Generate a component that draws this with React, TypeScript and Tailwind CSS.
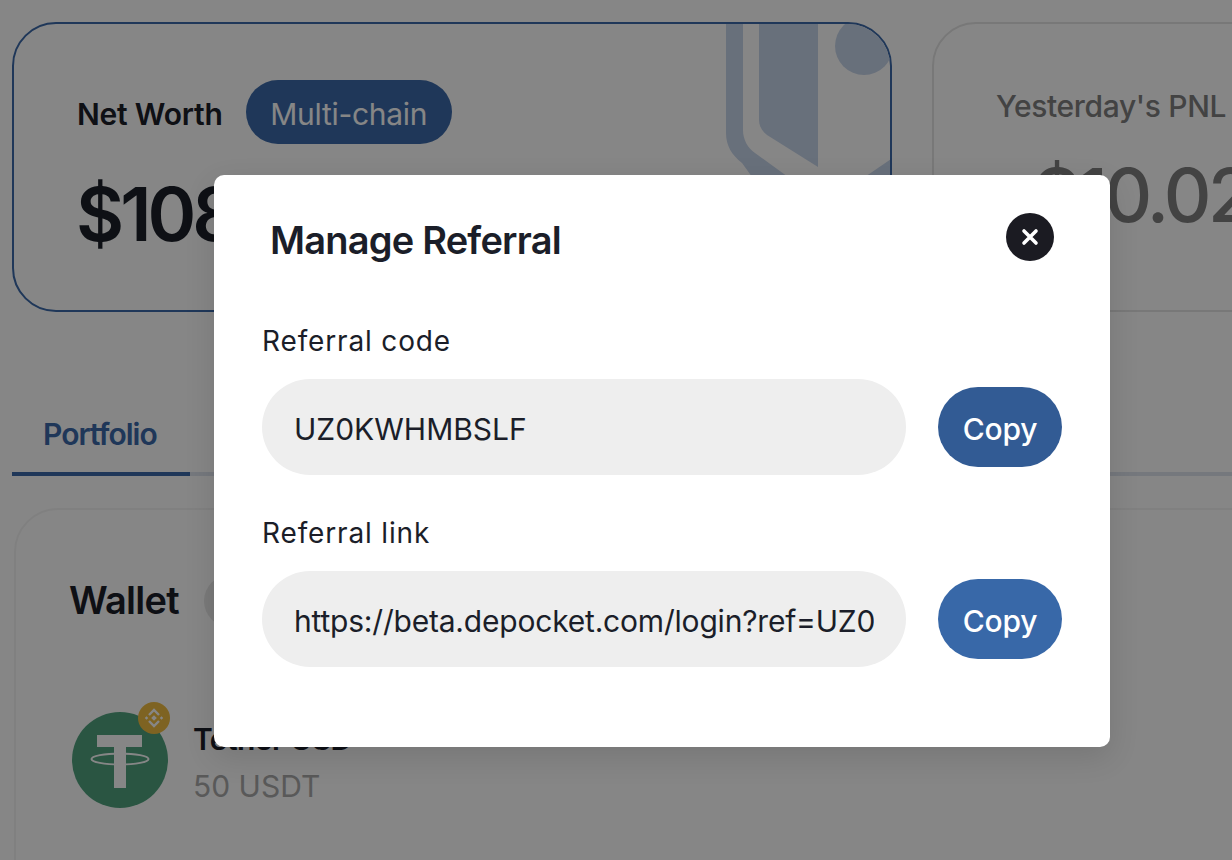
import React from "react";

function ShieldMark() {
  return (
    <svg className="absolute left-[712px] top-0" width="168" height="200" viewBox="0 0 168 200" fill="#c7d5ea">
      <path d="M0 0 H17 V106 C17 116 22 124 29 129 L80 166 V200 H60 L16 139 C6 131 0 122 0 109 Z" />
      <path d="M33 0 H92 V143 L41 111 C36 107 33 102 33 96 Z" />
      <circle cx="138" cy="22" r="29" />
      <path d="M168 133 L130 159 V170 H168 Z" />
    </svg>
  );
}

function TetherIcon() {
  return (
    <div className="relative -mt-[2px] h-[98px] w-[98px] shrink-0">
      <div className="mt-[1px] flex h-[96px] w-[96px] items-center justify-center rounded-full bg-[#50a37f] shadow-[0_0_0_1px_rgba(255,255,255,0.3)]">
        <svg width="96" height="96" viewBox="0 0 96 96" fill="none">
          <path d="M25 23 H70 V35 H54 V76 H42 V35 H25 Z" fill="#ffffff" />
          <ellipse cx="48" cy="47" rx="28.5" ry="5.5" stroke="#ffffff" strokeWidth="2" />
        </svg>
      </div>
      <div className="absolute right-0 top-[-9px] flex h-[32px] w-[32px] items-center justify-center rounded-full bg-[#f0bd42]">
        <svg width="22" height="22" viewBox="0 0 22 22" fill="none" stroke="#ffffff" strokeWidth="2.4">
          <path d="M6 8 L11 3 L16 8" />
          <path d="M6 14 L11 19 L16 14" />
          <path d="M11 8.2 L13.8 11 L11 13.8 L8.2 11 Z" fill="#ffffff" stroke="none" />
          <path d="M3.5 9.3 L5.2 11 L3.5 12.7 L1.8 11 Z M18.5 9.3 L20.2 11 L18.5 12.7 L16.8 11 Z" fill="#ffffff" stroke="none" />
        </svg>
      </div>
    </div>
  );
}

function Field({ label, value, button, tracking }: { label: string; value: string; button: string; tracking: string }) {
  return (
    <div className="flex flex-col">
      <div className="text-[28px] leading-[38px] tracking-[0.85px] text-[#1b1e29]">{label}</div>
      <div className="mt-[19px] flex items-center gap-[32px]">
        <div className="flex h-[96px] w-[644px] items-center rounded-full bg-[#eeeeee] px-[32px] pt-[4px]">
          <div className={`overflow-hidden whitespace-nowrap text-[30px] text-[#1b1e29] ${tracking}`}>{value}</div>
        </div>
        <button className={`h-[80px] w-[124px] rounded-full pt-[4px] text-[30px] font-medium tracking-[-0.2px] text-white ${button}`}>
          Copy
        </button>
      </div>
    </div>
  );
}

export default function App() {
  return (
    <div className="relative h-[860px] w-[1232px] overflow-hidden bg-white font-['Inter',sans-serif]">
      <div className="flex gap-[40px] pl-[12px] pt-[22px]">
        <div className="relative h-[290px] w-[880px] shrink-0 overflow-hidden rounded-[44px] border-2 border-[#3b69a9] pl-[64px] pt-[56px]">
          <ShieldMark />
          <div className="relative -ml-[1px] flex items-center gap-[23px]">
            <span className="pt-[4px] text-[30px] font-semibold tracking-[-0.2px] text-[#1b2029]">Net Worth</span>
            <span className="flex h-[64px] w-[206px] items-center justify-center rounded-full bg-[#3b69a9] pt-[4px] text-[30px] tracking-[-0.3px] text-white">Multi-chain</span>
          </div>
          <div className="relative -ml-[2px] mt-[25px] text-[74px] font-semibold leading-[90px] tracking-[-4px] text-[#1b2029]">$108,245.80</div>
        </div>
        <div className="h-[290px] w-[600px] shrink-0 rounded-[44px] border-2 border-[#e4e4e4] pl-[62px] pt-[62px]">
          <div className="text-[30px] font-medium leading-[40px] tracking-[-0.35px] text-[#808080]">Yesterday's PNL</div>
          <div className="ml-[37px] mt-[24px] text-[74px] font-medium leading-[90px] tracking-[-3.5px] text-[#808080]">$10.02</div>
        </div>
      </div>

      <div className="ml-[12px] mt-[101px] flex border-b-4 border-[#dfe4ee]">
        <div className="mb-[-4px] w-[178px] border-b-4 border-[#3b69a9] pb-[17px] pl-[31px] text-[30px] font-semibold leading-[42px] tracking-[-1px] text-[#3b69a9]">
          Portfolio
        </div>
      </div>

      <div className="ml-[14px] mt-[32px] h-[500px] w-[1400px] rounded-[44px] border-2 border-[#f4f4f4] pl-[53px] pt-[62px]">
        <div className="flex items-center gap-[25px]">
          <span className="text-[38px] font-semibold tracking-[-0.7px] text-[#1b2029]">Wallet</span>
          <span className="h-[52px] w-[120px] rounded-full bg-[#e8e8e8]"></span>
        </div>
        <div className="ml-[3px] mt-[84px] flex gap-[23px]">
          <TetherIcon />
          <div className="flex flex-col">
            <span className="mt-[5px] text-[30px] font-semibold leading-[42px] tracking-[-0.6px] text-[#1b2029]">Tether USD</span>
            <span className="mt-[5px] text-[30px] leading-[42px] text-[#aaaaaa]">50 USDT</span>
          </div>
        </div>
      </div>

      <div className="absolute inset-0 bg-[#000000]/[0.475] pl-[214px] pt-[175px]">
        <div className="h-[572px] w-[896px] rounded-[10px] bg-white px-[48px] shadow-[0_10px_30px_rgba(0,0,0,0.12)]">
          <div className="flex h-[130px] items-center justify-between">
            <h2 className="pl-[8px] text-[38px] font-semibold tracking-[-0.8px] text-[#1b1e29]">Manage Referral</h2>
            <button className="-mt-[6px] mr-[8px] flex h-[48px] w-[48px] items-center justify-center rounded-full bg-[#1b1b22]">
              <svg width="20" height="20" viewBox="0 0 20 20" fill="none" stroke="#ffffff" strokeWidth="3.6" strokeLinecap="round">
                <path d="M4 4 L16 16 M16 4 L4 16" />
              </svg>
            </button>
          </div>
          <div className="mt-[17px] flex flex-col gap-[39px]">
            <Field label="Referral code" value="UZ0KWHMBSLF" button="bg-[#325b94]" tracking="tracking-[0px]" />
            <Field label="Referral link" value="https://beta.depocket.com/login?ref=UZ0" button="bg-[#3868a8]" tracking="tracking-[-0.2px]" />
          </div>
        </div>
      </div>
    </div>
  );
}
